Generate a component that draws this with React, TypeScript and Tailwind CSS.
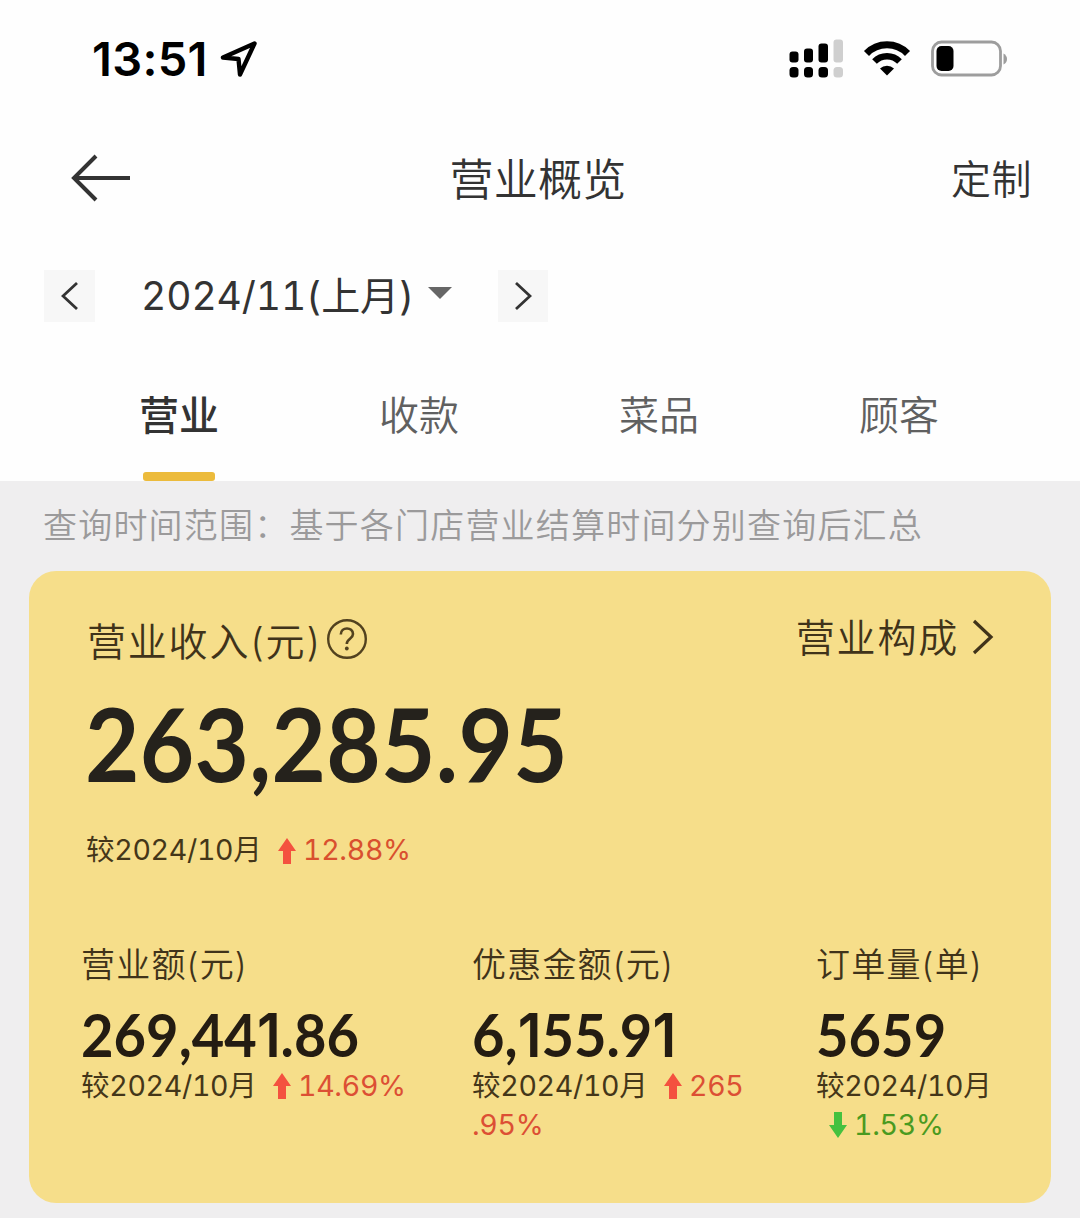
import type { ReactNode } from "react";

const tabs = ["营业", "收款", "菜品", "顾客"];

function StatusBar() {
  return (
    <div className="flex h-[118px] items-center justify-between pr-[72px] pl-[92px] text-black">
      <div className="flex items-center">
        <span className="text-[47px] leading-[56px] font-semibold tracking-[0.3px]">13:51</span>
        <svg className="ml-[12px]" width="38" height="38" viewBox="0 0 38 38" fill="none" stroke="#000" strokeWidth="4.4" strokeLinejoin="round">
          <path d="M34.500 3.500 L3 17.500 L18.500 19 L20 34.500 Z" />
        </svg>
      </div>
      <div className="flex items-center">
        <svg width="55" height="40" viewBox="0 0 55 40">
          <rect x="0.500" y="12.500" width="9" height="11" rx="3" />
          <rect x="15" y="9.500" width="9" height="14" rx="3" />
          <rect x="29.500" y="4.500" width="9.500" height="19" rx="3" />
          <rect x="44.500" y="0.500" width="9.500" height="23" rx="3" fill="#cfcfcf" />
          <rect x="0.500" y="28" width="9" height="10.500" rx="3.500" />
          <rect x="15" y="28" width="9" height="10.500" rx="3.500" />
          <rect x="29.500" y="28" width="9.500" height="10.500" rx="3.500" />
          <rect x="44.500" y="28" width="9.500" height="10.500" rx="3.500" fill="#cfcfcf" />
        </svg>
        <svg className="ml-[19px]" width="48" height="36" viewBox="0 0 48 36">
          <path d="M3.500 12.500 A28.500 28.500 0 0 1 44.500 12.500" fill="none" stroke="#000" strokeWidth="7" />
          <path d="M11.500 20.500 A17.500 17.500 0 0 1 36.500 20.500" fill="none" stroke="#000" strokeWidth="6.500" />
          <path d="M24 34.500 L17 27.500 A10 10 0 0 1 31 27.500 Z" />
        </svg>
        <svg className="ml-[20px]" width="77" height="38" viewBox="0 0 77 38">
          <rect x="1.500" y="2" width="68" height="33" rx="9" fill="none" stroke="#9d9d9d" strokeWidth="2.800" />
          <rect x="5.500" y="6" width="17" height="25" rx="5" />
          <path d="M72.500 13.500 Q76 15.500 76 19 Q76 22.500 72.500 24.500 Z" fill="#9d9d9d" />
        </svg>
      </div>
    </div>
  );
}

function Arrow({ down = false }: { down?: boolean }) {
  return (
    <svg className="inline-block shrink-0" width="18" height="26" viewBox="0 0 18 26">
      {down ? (
        <path d="M5 0 H13 V13 H18 L9 26 L0 13 H5 Z" fill="#45c13f" />
      ) : (
        <path d="M5 26 H13 V13 H18 L9 0 L0 13 H5 Z" fill="#f4513f" />
      )}
    </svg>
  );
}

// Lato digits, with the footless "1" taken from Inter
function Figures({ value }: { value: string }) {
  return (
    <span className="font-['Lato',sans-serif]">
      {value.split("").map((char, i) => (
        <span key={i} className={char === "1" ? "font-['Inter',sans-serif] font-semibold" : ""}>
          {char}
        </span>
      ))}
    </span>
  );
}

function Stat({ label, value, children }: { label: string; value: string; children: ReactNode }) {
  return (
    <div>
      <div className="h-[50px] text-[34px] leading-[52px] font-[350] tracking-[1.2px] whitespace-nowrap text-[#40331a]">{label}</div>
      <div className="mt-[10px] h-[71px]">
        <span className="inline-block origin-left scale-x-[0.935] text-[60px] leading-[70px] font-bold whitespace-nowrap text-[#241c12]">
          <Figures value={value} />
        </span>
      </div>
      <div className="-mt-[4px] text-[28.5px] leading-[39px] font-[390] tracking-[-0.3px] whitespace-nowrap text-[#443619] tabular-nums">{children}</div>
    </div>
  );
}

export default function App() {
  return (
    <div className="h-[1218px] w-[1080px] overflow-hidden bg-[#efeeef] font-['Inter','Noto_Sans_CJK_SC',sans-serif] text-[#333]">
      <div className="h-[481px] bg-[#fefefe]">
        <StatusBar />

        <div className="flex h-[120px] items-center justify-between pr-[48px] pl-[71px]">
          <svg width="60" height="48" viewBox="0 0 60 48" fill="none" stroke="#333" strokeWidth="4">
            <path d="M25 2 L3 24 L25 46 M3 24 H59" />
          </svg>
          <h1 className="-ml-[6px] pt-[3px] text-[44px] font-[350] tracking-[0.3px]">营业概览</h1>
          <span className="pt-[4px] text-[40px] font-[350] tracking-[0.5px]">定制</span>
        </div>

        <div className="flex h-[116px] items-center pl-[44px]">
          <button className="flex h-[52px] w-[51px] items-center justify-center bg-[#f7f7f7]">
            <svg width="18" height="30" viewBox="0 0 18 30" fill="none" stroke="#333" strokeWidth="2.800">
              <path d="M16 2 L2 15 L16 28" />
            </svg>
          </button>
          <span className="ml-[46px] w-[287px] text-[39px] font-[390] tracking-[-0.1px] whitespace-nowrap tabular-nums">2024/11(上月)</span>
          <svg width="24" height="12" viewBox="0 0 24 12" className="-mt-[6px]">
            <path d="M0 0 H24 L12 12 Z" fill="#666" />
          </svg>
          <button className="ml-[46px] flex h-[52px] w-[50px] items-center justify-center bg-[#f7f7f7]">
            <svg width="18" height="30" viewBox="0 0 18 30" fill="none" stroke="#333" strokeWidth="2.800">
              <path d="M2 2 L16 15 L2 28" />
            </svg>
          </button>
        </div>

        <div className="flex h-[127px] px-[59px]">
          {tabs.map((tab, i) => (
            <div key={tab} className="flex w-[240px] flex-col items-center justify-between pt-[32px]">
              <span className={i === 0 ? "text-[40px] leading-[60px] font-medium" : "text-[40px] leading-[60px] font-[350] text-[#606060]"}>{tab}</span>
              {i === 0 && <div className="h-[9px] w-[72px] rounded-[3px] bg-[#ecbb3c]" />}
            </div>
          ))}
        </div>
      </div>

      <p className="h-[90px] pl-[43px] text-[34px] leading-[90px] font-[350] tracking-[1.2px] whitespace-nowrap text-[#9b9a9b]">
        查询时间范围：基于各门店营业结算时间分别查询后汇总
      </p>

      <div className="mx-[29px] h-[632px] rounded-[27px] bg-[#f6de8a] pt-[38px]">
        <div className="flex h-[60px] justify-between pr-[57px] pl-[58px] text-[#40331a]">
          <div className="flex items-center pt-[6px]">
            <span className="text-[39px] font-[350] tracking-[1.800px]">营业收入(元)</span>
            <svg className="-mt-[7px] ml-[4px]" width="42" height="42" viewBox="0 0 42 42" fill="none">
              <circle cx="21" cy="21" r="18.800" stroke="#52421f" strokeWidth="2.400" />
              <path d="M14.800 16.500 C14.800 8.500 27 8.500 27 16 C27 21 20.800 20.500 20.800 26" stroke="#52421f" strokeWidth="2.600" />
              <circle cx="20.800" cy="30.500" r="1.900" fill="#52421f" />
            </svg>
          </div>
          <div className="-mt-[4px] flex items-center">
            <span className="pt-[3px] text-[39px] font-[350] tracking-[1.800px]">营业构成</span>
            <svg className="ml-[13px]" width="22" height="36" viewBox="0 0 22 36" fill="none" stroke="#40331a" strokeWidth="3.200">
              <path d="M2 2 L19 18 L2 34" />
            </svg>
          </div>
        </div>

        <div className="mt-[14px] h-[122px] pl-[56px]">
          <span className="inline-block origin-left scale-x-[0.93] text-[101px] leading-[120px] font-bold tracking-[0.3px] whitespace-nowrap text-[#25221c]">
            <Figures value="263,285.95" />
          </span>
        </div>

        <div className="mt-[26px] flex h-[39px] items-center pl-[57px] text-[28.5px] font-[390] tracking-[-0.3px] text-[#443619] tabular-nums">
          <span className="w-[192px] whitespace-nowrap">较2024/10月</span>
          <Arrow />
          <span className="ml-[7px] text-[#d9502f]">12.88%</span>
        </div>

        <div className="mt-[69px] grid grid-cols-[391px_344px_220px] pl-[52px]">
          <Stat label="营业额(元)" value="269,441.86">
            <div className="flex items-center">
              <span className="w-[192px]">较2024/10月</span>
              <Arrow />
              <span className="ml-[7px] text-[#dc4f34]">14.69%</span>
            </div>
          </Stat>
          <Stat label="优惠金额(元)" value="6,155.91">
            <div className="flex items-center">
              <span className="w-[192px]">较2024/10月</span>
              <Arrow />
              <span className="ml-[7px] text-[#dc4f34]">265</span>
            </div>
            <div className="text-[#dc4f34]">.95%</div>
          </Stat>
          <Stat label="订单量(单)" value="5659">
            <div>较2024/10月</div>
            <div className="flex items-center pl-[13px] text-[#4a9a20]">
              <Arrow down />
              <span className="ml-[7px]">1.53%</span>
            </div>
          </Stat>
        </div>
      </div>
    </div>
  );
}
